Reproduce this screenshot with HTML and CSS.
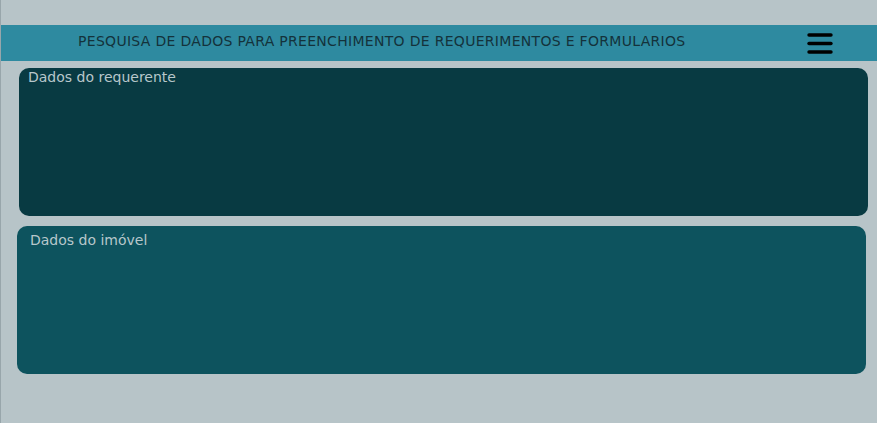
FILE: index.html
```html
<!DOCTYPE html>
<html lang="pt">
<head>
<meta charset="utf-8">
<title>Pesquisa de dados</title>
<link rel="stylesheet" href="styles.css">
</head>
<body>
<header class="topbar">
  <h1 class="title">PESQUISA DE DADOS PARA PREENCHIMENTO DE REQUERIMENTOS E FORMULARIOS</h1>
  <button class="menu" aria-label="Menu">
    <svg width="26" height="22" viewBox="0 0 26 22"><g stroke="#000" stroke-width="3.4" stroke-linecap="round"><line x1="2" y1="2" x2="24" y2="2"/><line x1="2" y1="10.5" x2="24" y2="10.5"/><line x1="2" y1="19" x2="24" y2="19"/></g></svg>
  </button>
</header>
<main class="content">
  <section class="card card-requerente">
    <h2 class="card-title">Dados do requerente</h2>
  </section>
  <section class="card card-imovel">
    <h2 class="card-title">Dados do imóvel</h2>
  </section>
</main>
</body>
</html>
```
FILE: styles.css
```css
html, body {
  margin: 0;
  padding: 0;
}
body {
  background: #b7c4c8;
  border-left: 1px solid #98a6ab;
  min-height: 423px;
  box-sizing: border-box;
  font-family: "DejaVu Sans", Verdana, sans-serif;
}
.topbar {
  margin-top: 25px;
  margin-left: -1px;
  height: 36px;
  background: #2e8aa0;
  display: flex;
  align-items: center;
  position: relative;
}
.title {
  margin: 0 0 0 78px;
  font-size: 14px;
  font-weight: normal;
  color: #14323b;
  letter-spacing: 0.3px;
  line-height: 1;
  padding-bottom: 4px;
}
.menu {
  position: absolute;
  left: 807px;
  top: 8px;
  padding: 0;
  border: 0;
  background: none;
  width: 26px;
  height: 22px;
}
.menu svg { display: block; }
.content {
  display: flex;
  flex-direction: column;
}
.card {
  width: 849px;
  height: 148px;
  border-radius: 10px;
  box-sizing: border-box;
}
.card-title {
  margin: 0;
  font-size: 14px;
  font-weight: normal;
  color: #b7c7cb;
  line-height: 17px;
}
.card-requerente {
  margin: 7px 0 0 18px;
  background: #083a42;
  padding: 1px 0 0 9px;
}
.card-imovel {
  margin: 10px 0 0 16px;
  background: #0d535e;
  padding: 6px 0 0 13px;
}
```
